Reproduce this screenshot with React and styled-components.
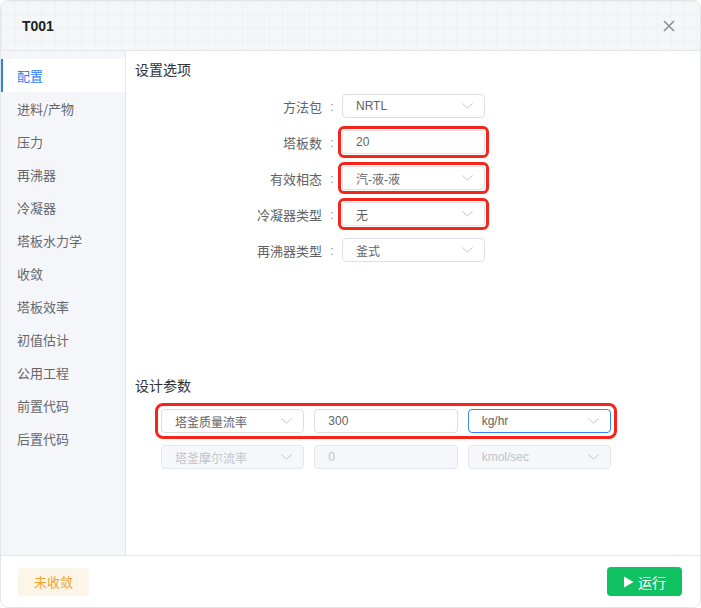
import styled, { createGlobalStyle } from 'styled-components'

const GlobalStyle = createGlobalStyle`
  body {
    margin: 0;
    background: #fff;
    font-family: "Liberation Sans", "Noto Sans CJK SC", sans-serif;
  }
  * { box-sizing: border-box; }
`

const menu = ['配置', '进料/产物', '压力', '再沸器', '冷凝器', '塔板水力学', '收敛', '塔板效率', '初值估计', '公用工程', '前置代码', '后置代码']

const options = [
  { label: '方法包', value: 'NRTL', select: true },
  { label: '塔板数', value: '20', marked: true },
  { label: '有效相态', value: '汽-液-液', select: true, marked: true },
  { label: '冷凝器类型', value: '无', select: true, marked: true },
  { label: '再沸器类型', value: '釜式', select: true },
]

function Chevron() {
  return (
    <svg width="11" height="6" viewBox="0 0 11 6" fill="none">
      <polyline points="0.5,0.5 5.5,5 10.5,0.5" stroke="#c0c4cc" strokeWidth="1" />
    </svg>
  )
}

function Field({ value, select, disabled, focused }) {
  return (
    <Box $disabled={disabled} $focused={focused}>
      <span>{value}</span>
      {select && <Chevron />}
    </Box>
  )
}

function App() {
  return (
    <>
      <GlobalStyle />
      <Dialog>
        <Header>
          <Title>T001</Title>
          <Close>
            <svg width="12" height="12" viewBox="0 0 12 12">
              <path d="M1 1 L11 11 M11 1 L1 11" stroke="#8c8f96" strokeWidth="1.6" />
            </svg>
          </Close>
        </Header>
        <Body>
          <Sidebar>
            {menu.map((m, i) => (
              <MenuItem key={m} $active={i === 0}>{m}</MenuItem>
            ))}
          </Sidebar>
          <Content>
            <SectionTitle>设置选项</SectionTitle>
            <Form>
              {options.map(o => (
                <Row key={o.label}>
                  <Label>{o.label}</Label>
                  <Colon>:</Colon>
                  <Marked $on={o.marked}>
                    <Field value={o.value} select={o.select} />
                  </Marked>
                </Row>
              ))}
            </Form>
            <SectionTitle $gap>设计参数</SectionTitle>
            <Params>
              <ParamRow $marked>
                <Field value="塔釜质量流率" select />
                <Field value="300" />
                <Field value="kg/hr" select focused />
              </ParamRow>
              <ParamRow>
                <Field value="塔釜摩尔流率" select disabled />
                <Field value="0" disabled />
                <Field value="kmol/sec" select disabled />
              </ParamRow>
            </Params>
          </Content>
        </Body>
        <Footer>
          <Badge>未收敛</Badge>
          <RunButton>
            <svg width="11" height="12" viewBox="0 0 11 12">
              <path d="M1 0.5 L10.5 6 L1 11.5 Z" fill="#fff" />
            </svg>
            运行
          </RunButton>
        </Footer>
      </Dialog>
    </>
  )
}

export default App

const Dialog = styled.div`
  width: 701px;
  height: 608px;
  border: 1px solid #e4e5e8;
  border-radius: 8px;
  overflow: hidden;
  display: flex;
  flex-direction: column;
  background: #fff;
`
const Header = styled.div`
  height: 50px;
  flex: none;
  display: flex;
  align-items: center;
  justify-content: space-between;
  padding: 0 25px 0 21px;
  border-bottom: 1px solid #e6e7ea;
  background-color: #f5f6f8;
  background-image:
    linear-gradient(to right, rgba(0, 0, 0, 0.025) 1px, transparent 1px),
    linear-gradient(to bottom, rgba(0, 0, 0, 0.025) 1px, transparent 1px);
  background-size: 13.4px 13.4px;
`
const Title = styled.div`
  font-size: 14px;
  font-weight: bold;
  color: #1f1f1f;
  margin-top: 1px;
`
const Close = styled.div`
  display: flex;
  align-items: center;
`
const Body = styled.div`
  flex: 1;
  display: flex;
  min-height: 0;
`
const Sidebar = styled.div`
  width: 125px;
  flex: none;
  background: #f5f6fa;
  border-right: 1px solid #e6e7ea;
  padding-top: 8px;
`
const MenuItem = styled.div`
  height: 33px;
  display: flex;
  align-items: center;
  padding-left: 14px;
  font-size: 13px;
  color: ${p => (p.$active ? '#2f80f5' : '#65676b')};
  background: ${p => (p.$active ? '#fff' : 'transparent')};
  border-left: 2px solid ${p => (p.$active ? '#2f80f5' : 'transparent')};
  font-family: "Noto Sans CJK SC", sans-serif;
`
const Content = styled.div`
  flex: 1;
  padding: 8px 10px 0 9px;
`
const SectionTitle = styled.div`
  font-size: 14px;
  line-height: 20px;
  color: #303133;
  margin-top: ${p => (p.$gap ? '113px' : '0')};
  font-family: "Noto Sans CJK SC", sans-serif;
`
const Form = styled.div`
  margin-top: 15px;
  display: flex;
  flex-direction: column;
  gap: 12px;
`
const Row = styled.div`
  display: flex;
  align-items: center;
  height: 24px;
`
const Label = styled.div`
  width: 187px;
  text-align: right;
  font-size: 13px;
  color: #606266;
  font-family: "Noto Sans CJK SC", sans-serif;
`
const Colon = styled.div`
  width: 20px;
  text-align: center;
  font-size: 13px;
  color: #909399;
`
const Marked = styled.div`
  width: 143px;
  display: flex;
  border-radius: 2px;
  outline: ${p => (p.$on ? '3px solid #f4251b' : 'none')};
  outline-offset: 1px;
`
const Box = styled.div`
  flex: 1;
  width: 143px;
  height: 24px;
  display: flex;
  align-items: center;
  justify-content: space-between;
  padding: 0 11px 0 13px;
  border: 1px solid ${p => (p.$focused ? '#3a86f7' : p.$disabled ? '#e4e7ed' : '#dcdfe6')};
  border-radius: 4px;
  background: ${p => (p.$disabled ? '#f5f7fa' : '#fff')};
  color: ${p => (p.$disabled ? '#c0c4cc' : '#606266')};
  font-size: 12px;
  font-family: "Liberation Sans", "Noto Sans CJK SC", sans-serif;
  span {
    white-space: nowrap;
  }
`
const Params = styled.div`
  margin-top: 14px;
  padding-left: 26px;
  display: flex;
  flex-direction: column;
  gap: 12px;
`
const ParamRow = styled.div`
  display: flex;
  gap: 10px;
  width: 450px;
  border-radius: 2px;
  outline: ${p => (p.$marked ? '3px solid #f4251b' : 'none')};
  outline-offset: 3px;
`
const Footer = styled.div`
  height: 52px;
  flex: none;
  border-top: 1px solid #e6e7ea;
  display: flex;
  align-items: center;
  justify-content: space-between;
  padding: 0 18px 0 17px;
`
const Badge = styled.div`
  height: 28px;
  padding: 0 16px;
  display: flex;
  align-items: center;
  border-radius: 4px;
  background: #fdf5e8;
  color: #f1a42c;
  font-size: 13px;
  font-family: "Noto Sans CJK SC", sans-serif;
`
const RunButton = styled.button`
  height: 29px;
  width: 75px;
  border: none;
  border-radius: 4px;
  background: #10c161;
  color: #fff;
  display: flex;
  align-items: center;
  justify-content: center;
  gap: 4px;
  font-size: 14px;
  font-family: "Noto Sans CJK SC", sans-serif;
  padding: 0;
`
